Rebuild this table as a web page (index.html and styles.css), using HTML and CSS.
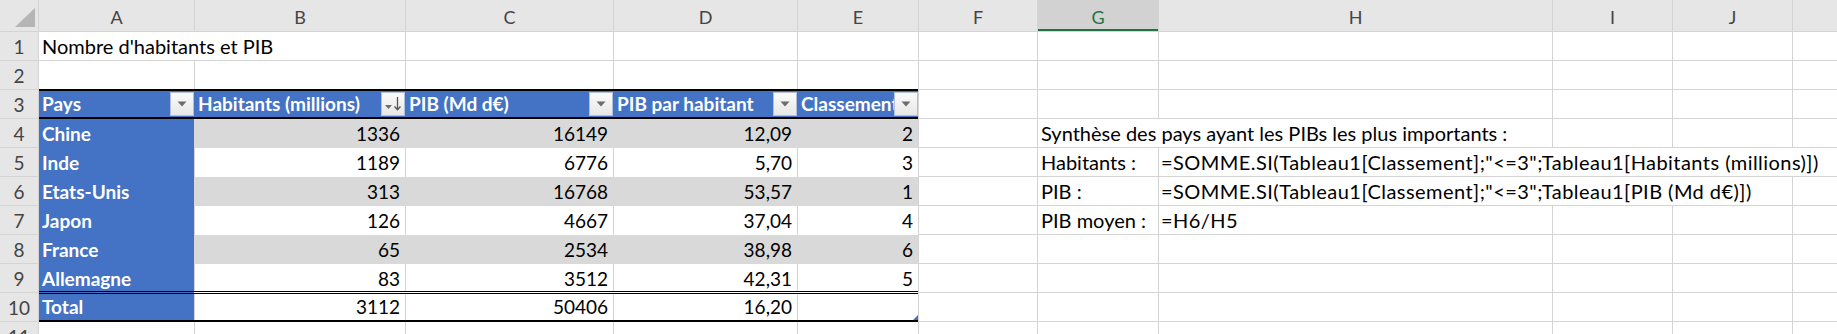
FILE: index.html
```html
<!DOCTYPE html>
<html lang="fr">
<head>
<meta charset="utf-8">
<title>Nombre d'habitants et PIB</title>
<link rel="stylesheet" href="styles.css">
</head>
<body>
<div class="sheet">
  <div class="corner"><svg width="38" height="31" viewBox="0 0 38 31"><polygon points="15,27 35,27 35,8" fill="#b5b5b5"/></svg></div>
  <div class="ch">A</div><div class="ch">B</div><div class="ch">C</div><div class="ch">D</div><div class="ch">E</div><div class="ch">F</div><div class="ch sel">G</div><div class="ch">H</div><div class="ch">I</div><div class="ch">J</div><div class="ch"></div>

  <div class="rh">1</div>
  <div class="c s2">Nombre d'habitants et PIB</div>
  <div class="c"></div><div class="c"></div><div class="c"></div><div class="c"></div><div class="c"></div><div class="c"></div><div class="c"></div><div class="c"></div><div class="c"></div>

  <div class="rh">2</div>
  <div class="c"></div><div class="c"></div><div class="c"></div><div class="c"></div><div class="c"></div><div class="c"></div><div class="c"></div><div class="c"></div><div class="c"></div><div class="c"></div><div class="c"></div>

  <div class="tbl">
    <div class="tr thead">
      <div class="th"><span class="lbl">Pays</span><span class="fbtn"><svg width="10" height="6" viewBox="0 0 10 6"><polygon points="0.5,0.5 9.5,0.5 5,5.5" fill="#6d6d6d"/></svg></span></div>
      <div class="th"><span class="lbl">Habitants (millions)</span><span class="fbtn"><svg width="22" height="22" viewBox="0 0 22 22"><polygon points="3,12 10,12 6.5,16" fill="#6d6d6d"/><path d="M15.5 4 V16.5 M12.5 13.5 L15.5 16.8 L18.5 13.5" stroke="#555" stroke-width="1.3" fill="none"/></svg></span></div>
      <div class="th"><span class="lbl">PIB (Md d€)</span><span class="fbtn"><svg width="10" height="6" viewBox="0 0 10 6"><polygon points="0.5,0.5 9.5,0.5 5,5.5" fill="#6d6d6d"/></svg></span></div>
      <div class="th"><span class="lbl">PIB par habitant</span><span class="fbtn"><svg width="10" height="6" viewBox="0 0 10 6"><polygon points="0.5,0.5 9.5,0.5 5,5.5" fill="#6d6d6d"/></svg></span></div>
      <div class="th"><span class="lbl">Classement</span><span class="fbtn"><svg width="10" height="6" viewBox="0 0 10 6"><polygon points="0.5,0.5 9.5,0.5 5,5.5" fill="#6d6d6d"/></svg></span></div>
    </div>
    <div class="tr band">
      <div class="td key">Chine</div><div class="td num">1336</div><div class="td num">16149</div><div class="td num">12,09</div><div class="td num">2</div>
    </div>
    <div class="tr plain">
      <div class="td key">Inde</div><div class="td num">1189</div><div class="td num">6776</div><div class="td num">5,70</div><div class="td num">3</div>
    </div>
    <div class="tr band">
      <div class="td key">Etats-Unis</div><div class="td num">313</div><div class="td num">16768</div><div class="td num">53,57</div><div class="td num">1</div>
    </div>
    <div class="tr plain">
      <div class="td key">Japon</div><div class="td num">126</div><div class="td num">4667</div><div class="td num">37,04</div><div class="td num">4</div>
    </div>
    <div class="tr band">
      <div class="td key">France</div><div class="td num">65</div><div class="td num">2534</div><div class="td num">38,98</div><div class="td num">6</div>
    </div>
    <div class="tr plain">
      <div class="td key">Allemagne</div><div class="td num">83</div><div class="td num">3512</div><div class="td num">42,31</div><div class="td num">5</div>
    </div>
    <div class="tr total">
      <div class="td key">Total</div><div class="td num">3112</div><div class="td num">50406</div><div class="td num">16,20</div><div class="td num handle"></div>
    </div>
  </div>

  <div class="rh">3</div>
  <div class="c"></div><div class="c"></div><div class="c"></div><div class="c"></div><div class="c"></div><div class="c"></div>

  <div class="rh">4</div>
  <div class="c"></div><div class="c s2">Synthèse des pays ayant les PIBs les plus importants :</div><div class="c"></div><div class="c"></div><div class="c"></div>

  <div class="rh">5</div>
  <div class="c"></div><div class="c">Habitants :</div><div class="c s4 f">=SOMME.SI(Tableau1[Classement];"&lt;=3";Tableau1[Habitants (millions)])</div>

  <div class="rh">6</div>
  <div class="c"></div><div class="c">PIB :</div><div class="c s3 f">=SOMME.SI(Tableau1[Classement];"&lt;=3";Tableau1[PIB (Md d€)])</div><div class="c"></div>

  <div class="rh">7</div>
  <div class="c"></div><div class="c">PIB moyen :</div><div class="c f">=H6/H5</div><div class="c"></div><div class="c"></div><div class="c"></div>

  <div class="rh">8</div>
  <div class="c"></div><div class="c"></div><div class="c"></div><div class="c"></div><div class="c"></div><div class="c"></div>

  <div class="rh">9</div>
  <div class="c"></div><div class="c"></div><div class="c"></div><div class="c"></div><div class="c"></div><div class="c"></div>

  <div class="rh">10</div>
  <div class="c"></div><div class="c"></div><div class="c"></div><div class="c"></div><div class="c"></div><div class="c"></div>

  <div class="rh">11</div>
  <div class="c"></div><div class="c"></div><div class="c"></div><div class="c"></div><div class="c"></div><div class="c"></div><div class="c"></div><div class="c"></div><div class="c"></div><div class="c"></div><div class="c"></div>
</div>
</body>
</html>
```

FILE: styles.css
```css
* { box-sizing: border-box; }
html, body {
  margin: 0;
  padding: 0;
  background: #fff;
  overflow: hidden;
}
body {
  font-family: Lato, "Liberation Sans", sans-serif;
  font-size: 19px;
  color: #000;
}
.sheet {
  display: grid;
  width: 1837px;
  height: 334px;
  overflow: hidden;
  grid-template-columns: 38px 155px 210px 207px 183px 120px 118px 120px 393px 119px 119px 44px;
  grid-template-rows: 31px repeat(11, 28px);
  gap: 1px;
  background: #d4d4d4;
}
.corner {
  background: #e6e6e6;
  line-height: 0;
}
.ch {
  background: #e6e6e6;
  color: #444;
  text-align: center;
  font-size: 18px;
  line-height: 31px;
  padding-top: 2px;
}
.ch.sel {
  background: #d2d2d2;
  color: #217346;
  border-bottom: 2px solid #217346;
}
.rh {
  background: #e6e6e6;
  color: #444;
  text-align: center;
  line-height: 29px;
}
.c {
  background: #fff;
  white-space: nowrap;
  font-size: 20px;
  line-height: 29px;
  padding-left: 3px;
}
.c.f {
  padding-left: 2px;
  letter-spacing: 0.45px;
}
.s2 { grid-column: span 2; }
.s3 { grid-column: span 3; }
.s4 { grid-column: span 4; }

/* table */
.tbl {
  grid-column: 2 / 7;
  grid-row: 4 / 12;
  margin: -1px 0;
  display: grid;
  grid-template-rows: 30px repeat(5, 29px) 27px 31px;
  background: #fff;
}
.tr {
  display: grid;
  grid-template-columns: 155px 210px 207px 183px 120px;
  column-gap: 1px;
  background-clip: padding-box;
}
.thead {
  background-color: #4472c4;
  border-top: 2px solid #000;
  border-bottom: 2px solid #000;
}
.th {
  display: flex;
  min-width: 0;
  color: #fff;
  font-weight: 700;
  line-height: 26px;
  padding-left: 3px;
}
.lbl {
  flex: 1;
  min-width: 0;
  white-space: nowrap;
  overflow: hidden;
}
.fbtn {
  flex: none;
  width: 24px;
  height: 24px;
  margin-top: 1px;
  border: 1px solid #b3bfd8;
  background: linear-gradient(#fbfbfb, #e7e7e7);
  display: flex;
  align-items: center;
  justify-content: center;
}
.td {
  white-space: nowrap;
  line-height: 29px;
  padding-left: 3px;
}
.num {
  text-align: right;
  padding-right: 5px;
}
.band { background-color: #d9d9d9; }
.band .td { background: #d9d9d9; }
.plain { background-color: #d4d4d4; }
.plain .td { background: #fff; }
.td.key {
  background: #4472c4;
  color: #fff;
  font-weight: 700;
}
.total {
  background-color: #d4d4d4;
  border-top: 3px double #000;
  border-bottom: 2px solid #000;
}
.total .td {
  background: #fff;
  line-height: 26px;
}
.total .td.key { background: #4472c4; }
.handle { position: relative; }
.handle::after {
  content: "";
  position: absolute;
  right: 0;
  bottom: 0;
  border-left: 5px solid transparent;
  border-bottom: 5px solid #4a6fb8;
}
```
